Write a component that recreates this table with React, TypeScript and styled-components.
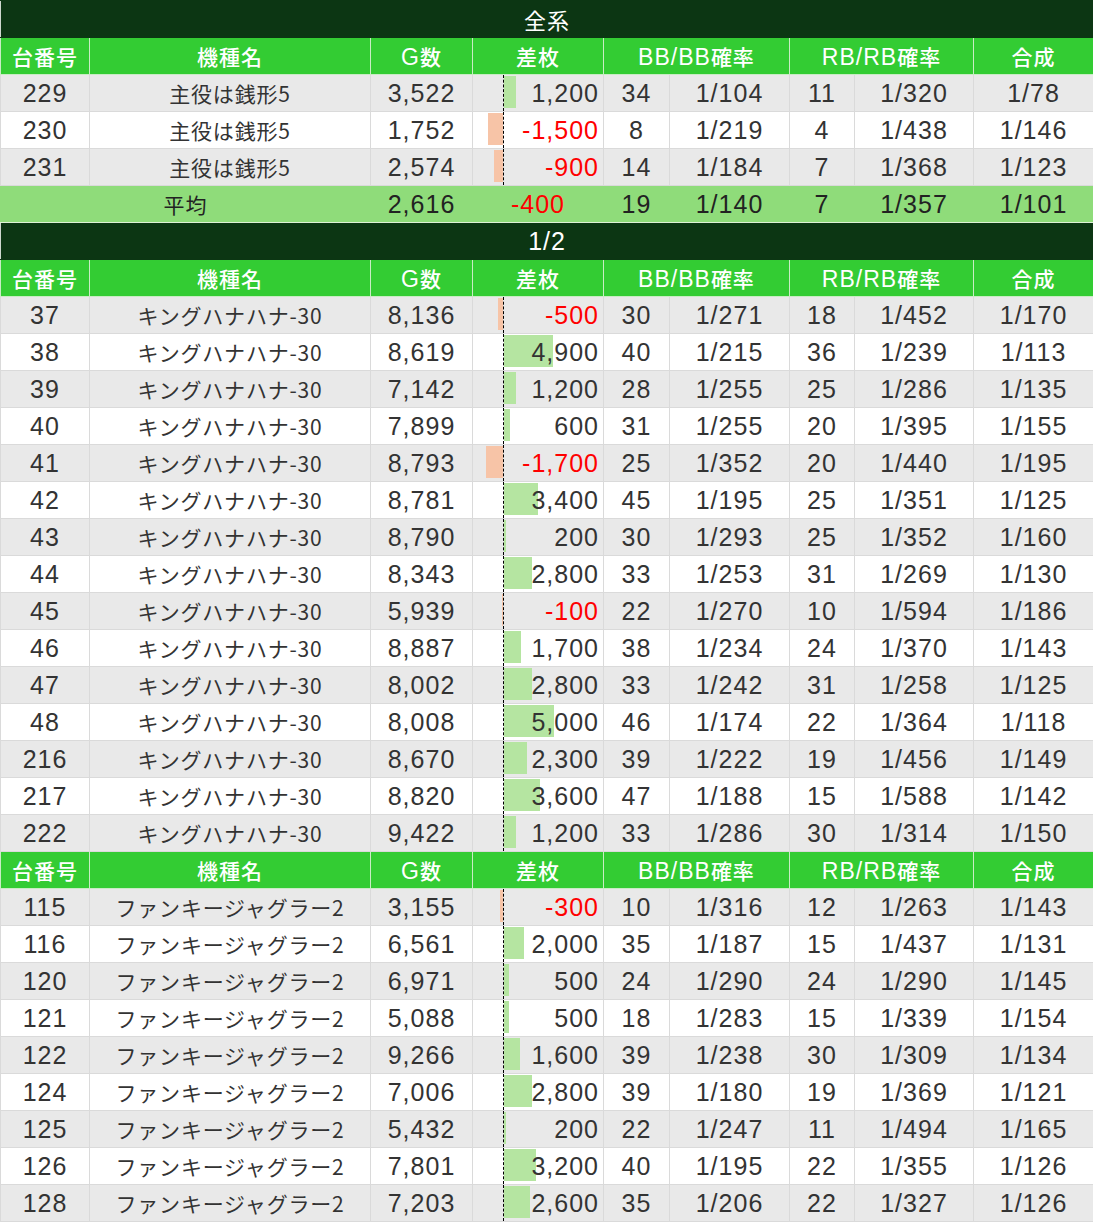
import React from "react";
import styled, { createGlobalStyle } from "styled-components";

const Global = createGlobalStyle`
  html, body { margin: 0; padding: 0; background: #ffffff; }
  body { font-family: "Liberation Sans", "Noto Sans CJK JP", sans-serif; }
`;

const Table = styled.table`
  width: 1093px;
  border-collapse: collapse;
  table-layout: fixed;
`;

const TitleCell = styled.td<{ $latin?: boolean }>`
  height: 36px;
  padding: 0;
  background: #0c3613;
  color: #ffffff;
  text-align: center;
  font-family: "Liberation Sans", "Noto Sans CJK JP", sans-serif;
  font-size: ${(p) => (p.$latin ? "25px" : "22px")};
  letter-spacing: 1px;
  border: 1px solid #0c3613;
  border-left-color: #cfd8cf;
`;

const HeadCell = styled.th`
  height: 36px;
  padding: 0;
  background: #33cc33;
  color: #ffffff;
  text-align: center;
  font-family: "Liberation Sans", "Noto Sans CJK JP", sans-serif;
  font-weight: 500;
  font-size: 21px;
  letter-spacing: 1px;
  border: 1px solid #c9ecc4;
  white-space: nowrap;
`;

const Latin = styled.span`
  font-family: "Liberation Sans", sans-serif;
  font-weight: 400;
  font-size: 23px;
`;

const Row = styled.tr<{ $alt: boolean }>`
  background: ${(p) => (p.$alt ? "#e9e9e9" : "#ffffff")};
`;

const AvgRow = styled.tr`
  background: #8fdc7a;
`;

const Cell = styled.td<{ $jp?: boolean }>`
  height: 36px;
  padding: 0;
  text-align: center;
  font-family: ${(p) =>
    p.$jp
      ? `"Noto Sans CJK JP", "Liberation Sans", sans-serif`
      : `"Liberation Sans", "Noto Sans CJK JP", sans-serif`};
  font-size: ${(p) => (p.$jp ? "21px" : "25px")};
  letter-spacing: ${(p) => (p.$jp ? "0.8px" : "1px")};
  color: #333333;
  border: 1px solid #dadada;
  white-space: nowrap;
  overflow: hidden;
`;

const AvgCell = styled.td<{ $red?: boolean; $jp?: boolean }>`
  height: 36px;
  padding: 0;
  text-align: center;
  font-family: ${(p) =>
    p.$jp
      ? `"Noto Sans CJK JP", "Liberation Sans", sans-serif`
      : `"Liberation Sans", "Noto Sans CJK JP", sans-serif`};
  font-size: ${(p) => (p.$jp ? "21px" : "25px")};
  letter-spacing: 1px;
  color: ${(p) => (p.$red ? "#ff0000" : "#222222")};
  border: 1px solid #dff3d8;
  border-left-color: #8fdc7a;
  border-right-color: #8fdc7a;
  white-space: nowrap;
`;

const DiffCell = styled.td<{ $red: boolean }>`
  position: relative;
  height: 36px;
  padding: 0 4px 0 0;
  text-align: right;
  font-family: "Liberation Sans", sans-serif;
  font-size: 25px;
  letter-spacing: 1px;
  color: ${(p) => (p.$red ? "#ff0000" : "#333333")};
  border: 1px solid #dadada;
  white-space: nowrap;
`;

const Axis = styled.span`
  position: absolute;
  left: 30px;
  top: 0;
  bottom: 0;
  border-left: 1px dashed #000000;
`;

const Bar = styled.span<{ $neg: boolean }>`
  position: absolute;
  top: 1px;
  bottom: 3px;
  background: ${(p) => (p.$neg ? "#f7c4a7" : "#b5e5a1")};
`;

const Value = styled.span`
  position: relative;
`;

type R = [string, string, string, number, string, string, string, string, string];

const fmt = (n: number) => {
  const s = Math.abs(n).toLocaleString("en-US");
  return n < 0 ? "-" + s : s;
};

const ZENI = "主役は銭形5";
const KING = "キングハナハナ-30";
const FUNKY = "ファンキージャグラー2";

const sec1: R[] = [
  ["229", ZENI, "3,522", 1200, "34", "1/104", "11", "1/320", "1/78"],
  ["230", ZENI, "1,752", -1500, "8", "1/219", "4", "1/438", "1/146"],
  ["231", ZENI, "2,574", -900, "14", "1/184", "7", "1/368", "1/123"],
];

const sec2: R[] = [
  ["37", KING, "8,136", -500, "30", "1/271", "18", "1/452", "1/170"],
  ["38", KING, "8,619", 4900, "40", "1/215", "36", "1/239", "1/113"],
  ["39", KING, "7,142", 1200, "28", "1/255", "25", "1/286", "1/135"],
  ["40", KING, "7,899", 600, "31", "1/255", "20", "1/395", "1/155"],
  ["41", KING, "8,793", -1700, "25", "1/352", "20", "1/440", "1/195"],
  ["42", KING, "8,781", 3400, "45", "1/195", "25", "1/351", "1/125"],
  ["43", KING, "8,790", 200, "30", "1/293", "25", "1/352", "1/160"],
  ["44", KING, "8,343", 2800, "33", "1/253", "31", "1/269", "1/130"],
  ["45", KING, "5,939", -100, "22", "1/270", "10", "1/594", "1/186"],
  ["46", KING, "8,887", 1700, "38", "1/234", "24", "1/370", "1/143"],
  ["47", KING, "8,002", 2800, "33", "1/242", "31", "1/258", "1/125"],
  ["48", KING, "8,008", 5000, "46", "1/174", "22", "1/364", "1/118"],
  ["216", KING, "8,670", 2300, "39", "1/222", "19", "1/456", "1/149"],
  ["217", KING, "8,820", 3600, "47", "1/188", "15", "1/588", "1/142"],
  ["222", KING, "9,422", 1200, "33", "1/286", "30", "1/314", "1/150"],
];

const sec3: R[] = [
  ["115", FUNKY, "3,155", -300, "10", "1/316", "12", "1/263", "1/143"],
  ["116", FUNKY, "6,561", 2000, "35", "1/187", "15", "1/437", "1/131"],
  ["120", FUNKY, "6,971", 500, "24", "1/290", "24", "1/290", "1/145"],
  ["121", FUNKY, "5,088", 500, "18", "1/283", "15", "1/339", "1/154"],
  ["122", FUNKY, "9,266", 1600, "39", "1/238", "30", "1/309", "1/134"],
  ["124", FUNKY, "7,006", 2800, "39", "1/180", "19", "1/369", "1/121"],
  ["125", FUNKY, "5,432", 200, "22", "1/247", "11", "1/494", "1/165"],
  ["126", FUNKY, "7,801", 3200, "40", "1/195", "22", "1/355", "1/126"],
  ["128", FUNKY, "7,203", 2600, "35", "1/206", "22", "1/327", "1/126"],
];

const widths = [89, 281, 102, 131, 66, 120, 65, 119, 120];

const Header = () => (
  <tr>
    <HeadCell>台番号</HeadCell>
    <HeadCell>機種名</HeadCell>
    <HeadCell>
      <Latin>G</Latin>数
    </HeadCell>
    <HeadCell>差枚</HeadCell>
    <HeadCell colSpan={2}>
      <Latin>BB/BB</Latin>確率
    </HeadCell>
    <HeadCell colSpan={2}>
      <Latin>RB/RB</Latin>確率
    </HeadCell>
    <HeadCell>合成</HeadCell>
  </tr>
);

const Title = ({ text, latin }: { text: string; latin?: boolean }) => (
  <tr>
    <TitleCell colSpan={9} $latin={latin}>
      {text}
    </TitleCell>
  </tr>
);

const DataRow = ({ r, alt }: { r: R; alt: boolean }) => {
  const v = r[3];
  const w = Math.round(Math.abs(v) / 100);
  return (
    <Row $alt={alt}>
      <Cell>{r[0]}</Cell>
      <Cell $jp>{r[1]}</Cell>
      <Cell>{r[2]}</Cell>
      <DiffCell $red={v < 0}>
        {v < 0 ? (
          <Bar $neg style={{ left: 30 - w, width: w }} />
        ) : (
          <Bar $neg={false} style={{ left: 31, width: w }} />
        )}
        <Axis />
        <Value>{fmt(v)}</Value>
      </DiffCell>
      <Cell>{r[4]}</Cell>
      <Cell>{r[5]}</Cell>
      <Cell>{r[6]}</Cell>
      <Cell>{r[7]}</Cell>
      <Cell>{r[8]}</Cell>
    </Row>
  );
};

export default function App() {
  return (
    <>
      <Global />
      <Table>
        <colgroup>
          {widths.map((w, i) => (
            <col key={i} style={{ width: w }} />
          ))}
        </colgroup>
        <tbody>
          <Title text="全系" />
          <Header />
          {sec1.map((r, i) => (
            <DataRow key={"a" + i} r={r} alt={i % 2 === 0} />
          ))}
          <AvgRow>
            <AvgCell colSpan={2} $jp>
              平均
            </AvgCell>
            <AvgCell>2,616</AvgCell>
            <AvgCell $red>-400</AvgCell>
            <AvgCell>19</AvgCell>
            <AvgCell>1/140</AvgCell>
            <AvgCell>7</AvgCell>
            <AvgCell>1/357</AvgCell>
            <AvgCell>1/101</AvgCell>
          </AvgRow>
          <Title text="1/2" latin />
          <Header />
          {sec2.map((r, i) => (
            <DataRow key={"b" + i} r={r} alt={i % 2 === 0} />
          ))}
          <Header />
          {sec3.map((r, i) => (
            <DataRow key={"c" + i} r={r} alt={i % 2 === 0} />
          ))}
        </tbody>
      </Table>
    </>
  );
}
